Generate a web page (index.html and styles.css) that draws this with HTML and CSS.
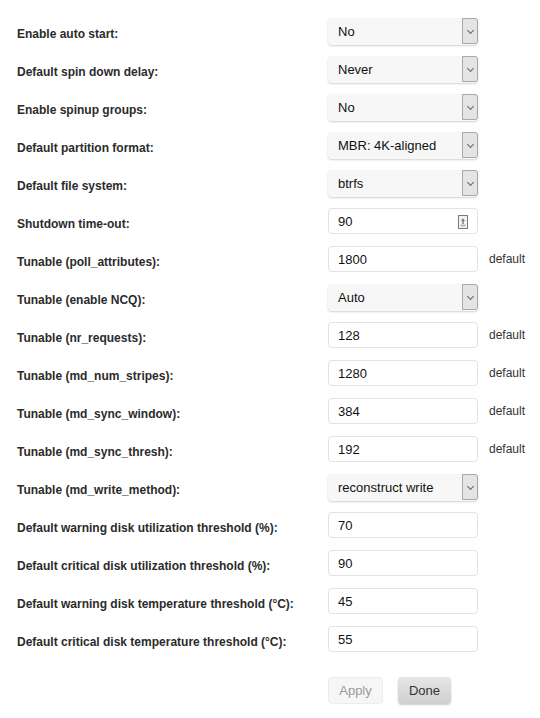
FILE: index.html
```html
<!DOCTYPE html>
<html lang="en">
<head>
    <meta charset="UTF-8">
    <meta name="viewport" content="width=device-width, initial-scale=1.0">
    <title>Disk Settings</title>
    <link rel="stylesheet" href="styles.css">
</head>
<body>
    <form class="settings">
        <div class="row">
            <label>Enable auto start:</label>
            <div class="select"><span>No</span><i class="arrow"></i></div>
        </div>
        <div class="row">
            <label>Default spin down delay:</label>
            <div class="select"><span>Never</span><i class="arrow"></i></div>
        </div>
        <div class="row">
            <label>Enable spinup groups:</label>
            <div class="select"><span>No</span><i class="arrow"></i></div>
        </div>
        <div class="row">
            <label>Default partition format:</label>
            <div class="select"><span>MBR: 4K-aligned</span><i class="arrow"></i></div>
        </div>
        <div class="row">
            <label>Default file system:</label>
            <div class="select"><span>btrfs</span><i class="arrow"></i></div>
        </div>
        <div class="row">
            <label>Shutdown time-out:</label>
            <div class="input number">
                <span>90</span>
                <svg class="spin" width="10" height="14" viewBox="0 0 10 14">
                    <rect x="0.5" y="0.5" width="9" height="13" fill="#f2f2f2" stroke="#7a7a7a"/>
                    <path d="M3 6 L5 3.2 L7 6 Z" fill="#7a7a7a"/>
                    <rect x="4.3" y="6" width="1.4" height="3" fill="#7a7a7a"/>
                    <rect x="2.5" y="9.5" width="5" height="2" fill="#b5b5b5"/>
                </svg>
            </div>
        </div>
        <div class="row">
            <label>Tunable (poll_attributes):</label>
            <div class="input"><span>1800</span></div>
            <span class="hint">default</span>
        </div>
        <div class="row">
            <label>Tunable (enable NCQ):</label>
            <div class="select"><span>Auto</span><i class="arrow"></i></div>
        </div>
        <div class="row">
            <label>Tunable (nr_requests):</label>
            <div class="input"><span>128</span></div>
            <span class="hint">default</span>
        </div>
        <div class="row">
            <label>Tunable (md_num_stripes):</label>
            <div class="input"><span>1280</span></div>
            <span class="hint">default</span>
        </div>
        <div class="row">
            <label>Tunable (md_sync_window):</label>
            <div class="input"><span>384</span></div>
            <span class="hint">default</span>
        </div>
        <div class="row">
            <label>Tunable (md_sync_thresh):</label>
            <div class="input"><span>192</span></div>
            <span class="hint">default</span>
        </div>
        <div class="row">
            <label>Tunable (md_write_method):</label>
            <div class="select"><span>reconstruct write</span><i class="arrow"></i></div>
        </div>
        <div class="row">
            <label>Default warning disk utilization threshold (%):</label>
            <div class="input"><span>70</span></div>
        </div>
        <div class="row">
            <label>Default critical disk utilization threshold (%):</label>
            <div class="input"><span>90</span></div>
        </div>
        <div class="row">
            <label>Default warning disk temperature threshold (&deg;C):</label>
            <div class="input"><span>45</span></div>
        </div>
        <div class="row">
            <label>Default critical disk temperature threshold (&deg;C):</label>
            <div class="input"><span>55</span></div>
        </div>
        <div class="row buttons">
            <label></label>
            <div class="actions">
                <span class="btn disabled">Apply</span>
                <span class="btn">Done</span>
            </div>
        </div>
    </form>
</body>
</html>
```

FILE: styles.css
```css
*{
    padding: 0;
    margin: 0;
    box-sizing: border-box;
}
body{
    font-family: "Liberation Sans", Arial, sans-serif;
    font-size: 13px;
    color: #333;
    background: #fff;
}
.settings{
    padding: 12px 0 0 17px;
}
.row{
    display: grid;
    grid-template-columns: 311px 150px auto;
    align-items: center;
    height: 38px;
}
.row label{
    font-size: 12px;
    font-weight: bold;
    color: #2b2b2b;
    padding-top: 6px;
}
.select{
    display: flex;
    align-items: center;
    justify-content: space-between;
    height: 27px;
    padding-left: 10px;
    background: #f7f7f7;
    border-radius: 4px;
    box-shadow: 0 1px 2px rgba(0, 0, 0, 0.18);
    color: #111;
}
.select .arrow{
    width: 16px;
    height: 26px;
    align-self: flex-start;
    background: #e4e4e4;
    border: 1px solid #a8a8a8;
    border-radius: 0 3px 3px 0;
    position: relative;
}
.select .arrow::after{
    content: "";
    position: absolute;
    left: 5px;
    top: 9px;
    width: 4px;
    height: 4px;
    border-right: 1px solid #666;
    border-bottom: 1px solid #666;
    transform: rotate(45deg);
}
.input{
    display: flex;
    align-items: center;
    justify-content: space-between;
    height: 26px;
    padding: 0 9px 0 9px;
    background: #fff;
    border: 1px solid #e2e2e2;
    border-radius: 4px;
    color: #111;
}
.number .spin{
    display: block;
    margin-top: 1px;
}
.hint{
    padding-left: 11px;
    font-size: 12px;
    color: #333;
}
.buttons{
    margin-top: 13px;
}
.actions{
    display: flex;
    gap: 15px;
}
.btn{
    display: inline-flex;
    align-items: center;
    justify-content: center;
    width: 53px;
    height: 27px;
    border-radius: 4px;
    color: #333;
    background: linear-gradient(#e6e6e6, #cfcfcf);
    box-shadow: 0 1px 2px rgba(0, 0, 0, 0.2);
}
.btn.disabled{
    width: 55px;
    color: #9a9a9a;
    background: #f6f6f6;
    border: 1px solid #ececec;
    box-shadow: none;
}
```
